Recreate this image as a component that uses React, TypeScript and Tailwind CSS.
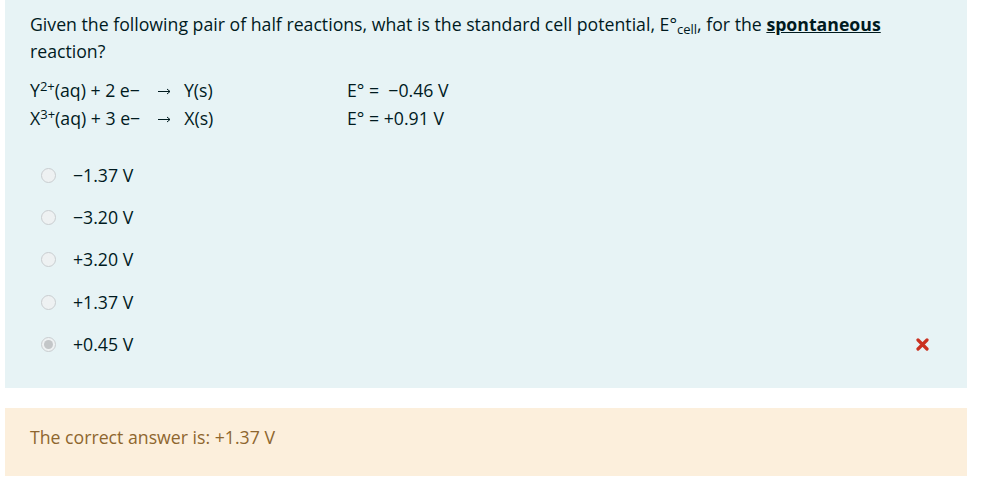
import React from "react";

function Radio({ checked }: { checked?: boolean }) {
  return (
    <span className="flex h-[15px] w-[15px] items-center justify-center rounded-full border border-[#c9cdd0] bg-[#eef1f2]">
      {checked ? <span className="h-[9px] w-[9px] rounded-full bg-[#c3c6c8]" /> : null}
    </span>
  );
}

function Arrow() {
  return (
    <svg width="13" height="7" viewBox="0 0 13 7" className="ml-[18px] mr-[13px] inline-block align-[2px]">
      <path d="M0 3.5 H12 M9 1 L12 3.5 L9 6" stroke="#001a1e" strokeWidth="1" fill="none" />
    </svg>
  );
}

const options = ["−1.37 V", "−3.20 V", "+3.20 V", "+1.37 V", "+0.45 V"];

export default function App() {
  return (
    <div className="h-[493px] w-[981px] bg-white pt-0 font-['Open_Sans',sans-serif] text-[17.7px] text-[#001a1e]">
      <div className="ml-[5px] h-[388px] w-[962px] bg-[#e7f3f5] pl-[25px] pt-[11px]">
        <p className="w-[900px] leading-[27px]">
          Given the following pair of half reactions, what is the standard cell potential, E
          <span>°</span>
          <sub className="text-[13px] leading-none">cell</sub>, for the{" "}
          <span className="font-bold underline">spontaneous</span> reaction?
        </p>
        <div className="mt-[11px] grid grid-cols-[317px_auto] auto-rows-[28px] items-center">
          <div className="leading-[28px]">
            Y<sup className="text-[13px] leading-none">2+</sup>(aq) + 2 e−<Arrow />Y(s)
          </div>
          <div className="leading-[28px]">E° = &nbsp;−0.46 V</div>
          <div className="leading-[28px]">
            X<sup className="text-[13px] leading-none">3+</sup>(aq) + 3 e−<Arrow />X(s)
          </div>
          <div className="leading-[28px]">E° = +0.91 V</div>
        </div>
        <div className="mt-[22px] flex flex-col">
          {options.map((o, i) => (
            <div key={o} className="flex h-[42.3px] items-center">
              <div className="ml-[11px] mr-[17px]">
                <Radio checked={i === 4} />
              </div>
              <span className="flex-1">{o}</span>
              {i === 4 ? (
                <svg width="13" height="13" viewBox="0 0 13 13" className="mr-[38px]">
                  <path d="M2 2 L11 11 M11 2 L2 11" stroke="#ca3120" strokeWidth="3.2" strokeLinecap="round" />
                </svg>
              ) : null}
            </div>
          ))}
        </div>
      </div>
      <div className="ml-[5px] mt-[20px] h-[68px] w-[962px] bg-[#fcefdc] pl-[25px] pt-[16px] leading-[27px] text-[#8e662e]">
        The correct answer is: +1.37 V
      </div>
    </div>
  );
}
